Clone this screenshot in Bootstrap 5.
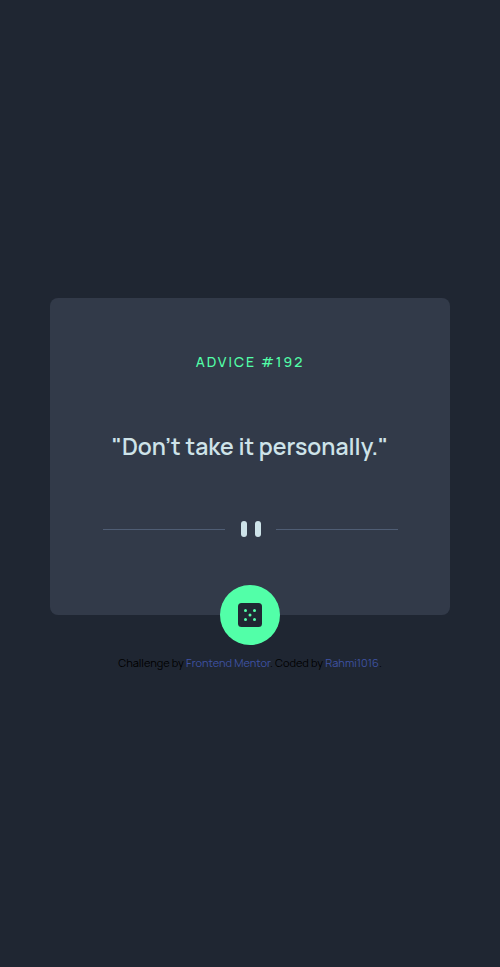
<!DOCTYPE html>
<html lang="en">
<head>
<meta charset="utf-8">
<meta name="viewport" content="width=device-width, initial-scale=1">
<title>Advice generator app</title>
<link href="https://cdn.jsdelivr.net/npm/bootstrap@5.3.0/dist/css/bootstrap.min.css" rel="stylesheet">
<style>
  body { background: #1f2632; font-family: Manrope, Inter, "Open Sans", sans-serif; }
  .advice-card { max-width: 400px; background: #323a49; border-radius: 8px; padding: 56px 52px 0; }
  .advice-id { color: #52ffa8; font-size: 14px; font-weight: 500; line-height: 16px; letter-spacing: 2px; margin-bottom: 59px; }
  .advice-quote { color: #cee3e9; font-size: 23px; font-weight: 600; line-height: 34px; margin-bottom: 58px; }
  .divider-line { height: 1px; background: #4f5d74; }
  .quote-mark { margin: 0 15px 0 16px; }
  .divider { margin-bottom: 48px; padding-left: 1px; }
  .dice-btn { width: 60px; height: 60px; background: #52ffa8; margin-bottom: -30px; }
  .dice-btn:hover { box-shadow: 0 0 32px #52ffa8; }
  .attribution { font-size: 11px; line-height: 12px; color: #000; margin-top: 42px; }
  .attribution a { color: #3e52a3; }
</style>
</head>
<body>
<div class="min-vh-100 d-flex flex-column align-items-center justify-content-center">
  <main class="advice-card w-100 d-flex flex-column align-items-center text-center">
    <h1 class="advice-id">ADVICE #192</h1>
    <p class="advice-quote">"Don’t take it personally."</p>
    <div class="divider d-flex align-items-center w-100">
      <div class="divider-line flex-fill"></div>
      <svg class="quote-mark" width="20" height="16" viewBox="0 0 20 16" fill="#cee3e9" aria-hidden="true"><rect width="6" height="16" rx="3"/><rect x="14" width="6" height="16" rx="3"/></svg>
      <div class="divider-line flex-fill"></div>
    </div>
    <button type="button" class="dice-btn btn rounded-circle border-0 p-0 d-flex align-items-center justify-content-center" aria-label="New advice">
      <svg width="24" height="24" viewBox="0 0 24 24" aria-hidden="true"><rect width="24" height="24" rx="3.5" fill="#202733"/><g fill="#52ffa8"><circle cx="7.5" cy="7.5" r="1.5"/><circle cx="16.5" cy="7.5" r="1.5"/><circle cx="12" cy="12" r="1.5"/><circle cx="7.5" cy="16.5" r="1.5"/><circle cx="16.5" cy="16.5" r="1.5"/></g></svg>
    </button>
  </main>
  <footer class="attribution text-center">Challenge by <a class="text-decoration-none" href="https://www.frontendmentor.io">Frontend Mentor</a>. Coded by <a class="text-decoration-none" href="#">Rahmi1016</a>.</footer>
</div>
<script src="https://cdn.jsdelivr.net/npm/bootstrap@5.3.0/dist/js/bootstrap.bundle.min.js"></script>
</body>
</html>
